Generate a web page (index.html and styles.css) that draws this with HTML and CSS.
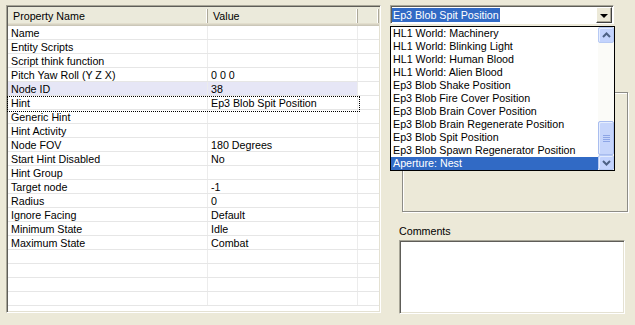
FILE: index.html
```html
<!DOCTYPE html>
<html lang="en">

<head>
    <meta charset="UTF-8">
    <title>Object Properties</title>
    <link rel="stylesheet" href="styles.css">
</head>

<body>
    <section class="prop-list">
        <div class="prop-head">
            <span class="head-cell">Property Name</span>
            <span class="head-cell">Value</span>
            <span class="head-cell"></span>
        </div>
        <div class="prop-row"><span>Name</span><span></span><span></span></div>
        <div class="prop-row"><span>Entity Scripts</span><span></span><span></span></div>
        <div class="prop-row"><span>Script think function</span><span></span><span></span></div>
        <div class="prop-row"><span>Pitch Yaw Roll (Y Z X)</span><span>0 0 0</span><span></span></div>
        <div class="prop-row selected"><span>Node ID</span><span>38</span><span></span></div>
        <div class="prop-row focus"><span>Hint</span><span>Ep3 Blob Spit Position</span><span></span></div>
        <div class="prop-row"><span>Generic Hint</span><span></span><span></span></div>
        <div class="prop-row"><span>Hint Activity</span><span></span><span></span></div>
        <div class="prop-row"><span>Node FOV</span><span>180 Degrees</span><span></span></div>
        <div class="prop-row"><span>Start Hint Disabled</span><span>No</span><span></span></div>
        <div class="prop-row"><span>Hint Group</span><span></span><span></span></div>
        <div class="prop-row"><span>Target node</span><span>-1</span><span></span></div>
        <div class="prop-row"><span>Radius</span><span>0</span><span></span></div>
        <div class="prop-row"><span>Ignore Facing</span><span>Default</span><span></span></div>
        <div class="prop-row"><span>Minimum State</span><span>Idle</span><span></span></div>
        <div class="prop-row"><span>Maximum State</span><span>Combat</span><span></span></div>
        <div class="prop-row"><span></span><span></span><span></span></div>
        <div class="prop-row"><span></span><span></span><span></span></div>
        <div class="prop-row"><span></span><span></span><span></span></div>
        <div class="prop-row"><span></span><span></span><span></span></div>
    </section>

    <section class="side">
        <div class="combo">
            <div class="combo-text"><span class="combo-sel">Ep3 Blob Spit Position</span></div>
            <div class="combo-btn"><span class="arrow"></span></div>
        </div>

        <div class="drop-list">
            <div class="drop-items">
                <div class="drop-item">HL1 World: Machinery</div>
                <div class="drop-item">HL1 World: Blinking Light</div>
                <div class="drop-item">HL1 World: Human Blood</div>
                <div class="drop-item">HL1 World: Alien Blood</div>
                <div class="drop-item">Ep3 Blob Shake Position</div>
                <div class="drop-item">Ep3 Blob Fire Cover Position</div>
                <div class="drop-item">Ep3 Blob Brain Cover Position</div>
                <div class="drop-item">Ep3 Blob Brain Regenerate Position</div>
                <div class="drop-item">Ep3 Blob Spit Position</div>
                <div class="drop-item">Ep3 Blob Spawn Regenerator Position</div>
                <div class="drop-item active">Aperture: Nest</div>
            </div>
            <div class="scroll">
                <div class="scroll-btn">
                    <svg width="9" height="6" viewBox="0 0 9 6"><path d="M1 5 L4.5 1.5 L8 5" fill="none" stroke="#4d6185" stroke-width="2"/></svg>
                </div>
                <div class="scroll-track">
                    <div class="scroll-thumb">
                        <span class="grip"></span>
                        <span class="grip"></span>
                        <span class="grip"></span>
                        <span class="grip"></span>
                    </div>
                </div>
                <div class="scroll-btn down">
                    <svg width="9" height="6" viewBox="0 0 9 6"><path d="M1 1 L4.5 4.5 L8 1" fill="none" stroke="#4d6185" stroke-width="2"/></svg>
                </div>
            </div>
        </div>

        <div class="group-frame"></div>

        <div class="comments-label">Comments</div>
        <div class="comments-box"></div>
    </section>
</body>

</html>
```

FILE: styles.css
```css
* {
    margin: 0;
    padding: 0;
    box-sizing: border-box;
}

body {
    display: flex;
    width: 635px;
    height: 325px;
    padding: 5px 0 0 6px;
    background: #ece9d8;
    font-family: "Liberation Sans", Arial, sans-serif;
    font-size: 10.7px;
    color: #000;
    overflow: hidden;
}

/* property grid */
.prop-list {
    width: 375px;
    height: 308px;
    background: #fff;
    border-top: 1px solid #a7a597;
    border-left: 1px solid #a7a597;
    border-right: 1px solid #fff;
    border-bottom: 1px solid #fff;
    box-shadow: inset 1px 1px 0 #5e5d58, inset -1px -1px 0 #e4e1d2;
    padding: 1px;
    overflow: hidden;
}

.prop-head {
    display: grid;
    grid-template-columns: 200px 150px 1fr;
    height: 19px;
    background: #ebeadb;
    box-shadow: inset 0 -1px 0 #cbc7b8, inset 0 -2px 0 #d6d2c2, inset 0 -3px 0 #e2decd;
}

.head-cell {
    padding: 1px 0 0 5px;
    line-height: 13px;
    border-right: 1px solid #aca899;
    box-shadow: inset -1px 0 0 #fff;
    margin: 2px 0 4px;
}

.prop-row {
    display: grid;
    grid-template-columns: 200px 150px 1fr;
    height: 14px;
    border-bottom: 1px solid #e6e6e6;
}

.prop-row>span {
    padding: 1px 0 0 3px;
    line-height: 12px;
    white-space: nowrap;
    border-right: 1px solid #ececec;
}

.prop-row>span:last-child {
    border-right: none;
}

.prop-row.selected>span:nth-child(-n+2) {
    background: #e6e6f6;
}

.prop-row.focus {
    position: relative;
}

.prop-row.focus::after {
    content: "";
    position: absolute;
    left: -1px;
    top: 0;
    width: 351px;
    height: 14px;
    border: 1px dotted #000;
}

/* right side */
.side {
    position: relative;
    width: 245px;
    margin-left: 9px;
}

.combo {
    display: flex;
    width: 224px;
    height: 19px;
    border-top: 1px solid #a7a597;
    border-left: 1px solid #a7a597;
    border-right: 1px solid #fff;
    border-bottom: 1px solid #fff;
    box-shadow: inset 1px 1px 0 #5e5d58;
    background: #fff;
    padding: 1px 1px 0 1px;
}

.combo-text {
    flex: 1;
    padding-top: 1px;
}

.combo-sel {
    display: inline-block;
    height: 14px;
    line-height: 14px;
    padding: 0 1px 0 1px;
    background: #316ac5;
    color: #fff;
}

.combo-btn {
    display: flex;
    align-items: center;
    justify-content: center;
    width: 16px;
    height: 16px;
    background: #ece9d8;
    border-top: 1px solid #fff;
    border-left: 1px solid #fff;
    border-right: 1px solid #404040;
    border-bottom: 1px solid #404040;
    box-shadow: inset -1px -1px 0 #aca899;
}

.arrow {
    width: 0;
    height: 0;
    border-left: 4px solid transparent;
    border-right: 4px solid transparent;
    border-top: 4px solid #000;
    margin-top: 1px;
}

.drop-list {
    position: absolute;
    left: 0;
    top: 21px;
    z-index: 2;
    display: flex;
    width: 225px;
    height: 145px;
    border: 1px solid #000;
    background: #fff;
}

.drop-items {
    flex: 1;
}

.drop-item {
    height: 13px;
    line-height: 13px;
    padding-left: 2px;
    white-space: nowrap;
}

.drop-item.active {
    background: #316ac5;
    color: #fff;
}

.scroll {
    display: flex;
    flex-direction: column;
    width: 16px;
    background: #fbfbf8;
}

.scroll-btn {
    display: flex;
    align-items: center;
    justify-content: center;
    height: 16px;
    background: #c3d3fd;
    border: 1px solid #b6c9f4;
    border-radius: 2px;
    box-shadow: inset 1px 1px 0 #e4ecfe;
}

.scroll-btn.down {
    height: 15px;
}

.scroll-track {
    flex: 1;
    display: flex;
    flex-direction: column;
    justify-content: flex-end;
}

.scroll-thumb {
    display: flex;
    flex-direction: column;
    align-items: center;
    justify-content: center;
    gap: 1px;
    height: 34px;
    background: #c6d5fb;
    border: 1px solid #a9bdef;
    border-radius: 2px;
    box-shadow: inset 1px 1px 0 #e6eefe;
}

.grip {
    width: 7px;
    height: 1px;
    background: #8ea6e6;
}

.group-frame {
    width: 226px;
    height: 120px;
    margin: 68px 0 0 12px;
    border: 1px solid #8d8c86;
    box-shadow: inset 1px 1px 0 #fff, 1px 1px 0 #fff;
}

.comments-label {
    margin: 13px 0 0 9px;
    height: 15px;
    line-height: 13px;
}

.comments-box {
    width: 226px;
    height: 74px;
    margin-left: 9px;
    background: #fff;
    border-top: 1px solid #a7a597;
    border-left: 1px solid #a7a597;
    border-right: 1px solid #fff;
    border-bottom: 1px solid #fff;
    box-shadow: inset 1px 1px 0 #5e5d58, inset -1px -1px 0 #e4e1d2;
}
```
